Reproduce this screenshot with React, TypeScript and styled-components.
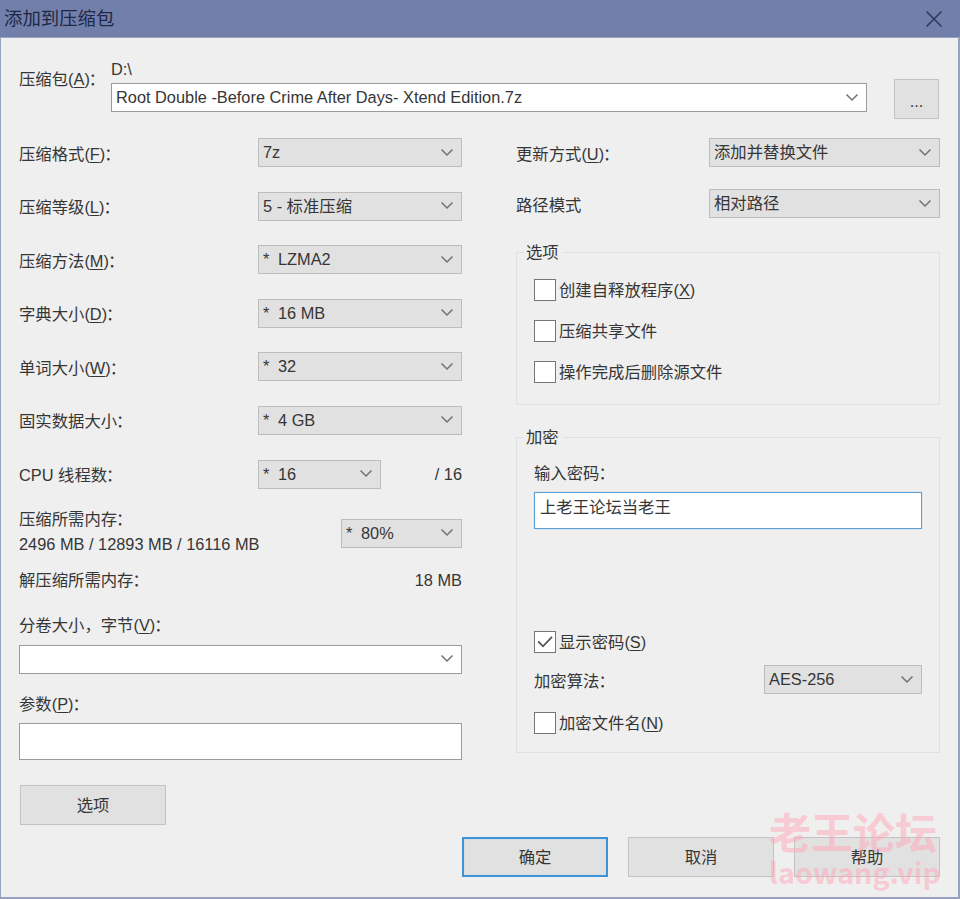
import React from "react";
import styled, { createGlobalStyle, css } from "styled-components";

const GlobalStyle = createGlobalStyle`
  * { box-sizing: border-box; }
  body { margin: 0; background: #efefef; }
`;

const Dialog = styled.div`
  position: relative;
  width: 960px;
  height: 899px;
  display: flex;
  flex-direction: column;
  overflow: hidden;
  background: #efefef;
  color: #363636;
  font-family: "Liberation Sans", "Noto Sans CJK SC", sans-serif;
  font-size: 16.35px;
  line-height: 20px;
  white-space: pre;
`;

const TitleBar = styled.header`
  height: 37px;
  flex: none;
  display: flex;
  align-items: center;
  justify-content: space-between;
  padding: 0 17px 0 4px;
  background: #737fab;
  color: #1c2846;
  font-size: 18.4px;
`;

const Body = styled.main`
  flex: 1;
  display: flex;
  flex-direction: column;
  padding: 22px 18px 0 18px;
  border: solid #98a2bf;
  border-width: 1px 2px 2px 1px;
`;

const ArchiveRow = styled.div`
  display: flex;
  height: 59px;
`;

const ArchiveLabel = styled.div`
  width: 92px;
  padding-top: 9px;
`;

const ArchiveField = styled.div`
  width: 756px;
  margin-right: 27px;
`;

const Path = styled.div`
  height: 23px;
  line-height: 18px;
`;

const Columns = styled.div`
  display: flex;
  justify-content: space-between;
  margin-top: 19px;
`;

const LeftColumn = styled.section`
  width: 443px;
`;

const RightColumn = styled.section`
  width: 424px;
`;

const Row = styled.div<{ $gap?: number }>`
  display: flex;
  justify-content: space-between;
  align-items: center;
  height: 29px;
  margin-bottom: ${(p) => p.$gap ?? 24.6}px;
`;

const Label = styled.div`
  padding-top: 2px;
`;

const ThreadFields = styled.div`
  width: 204px;
  display: flex;
  align-items: center;
  justify-content: space-between;
`;

const Mnemonic = styled.span`
  text-decoration: underline;
  text-decoration-thickness: 1px;
  text-underline-offset: 2px;
`;

const ColonMark = styled.span`
  display: inline-block;
  margin-left: -1px;
`;

const ComboBox = styled.div<{ $width: number; $editable?: boolean }>`
  width: ${(p) => p.$width}px;
  height: 29px;
  display: flex;
  align-items: center;
  justify-content: space-between;
  padding: 0 7px 1px 4px;
  border: 1px solid ${(p) => (p.$editable ? "#9b9b9b" : "#bdbdbd")};
  background: ${(p) => (p.$editable ? "#fff" : "#e1e1e1")};
`;

const Star = styled.span`
  display: inline-block;
  width: 15px;
`;

const MemoryRow = styled.div`
  display: flex;
  justify-content: space-between;
  height: 52px;
  line-height: 25px;
`;

const MemoryText = styled.div`
  margin-top: -1px;
`;

const MemoryCombo = styled.div`
  padding-top: 11px;
  line-height: 20px;
`;

const DecompressRow = styled.div`
  display: flex;
  justify-content: space-between;
  margin-top: 10px;
`;

const FieldLabel = styled.div<{ $top: number; $bottom: number }>`
  margin: ${(p) => p.$top}px 0 ${(p) => p.$bottom}px;
`;

const TextInput = styled.div<{ $focused?: boolean }>`
  height: 37px;
  padding: 4px 5px;
  border: 1px solid #9b9b9b;
  background: #fff;
  ${(p) =>
    p.$focused &&
    css`
      border-color: #5c9fd4;
      box-shadow: 0 0 1px #8cc4ee;
    `}
`;

const Button = styled.div<{ $width: number; $primary?: boolean }>`
  width: ${(p) => p.$width}px;
  height: 40px;
  flex: none;
  display: flex;
  align-items: center;
  justify-content: center;
  border: 1px solid #c3c3c3;
  background: #e1e1e1;
  ${(p) =>
    p.$primary &&
    css`
      border: 2px solid #3f92d6;
      box-shadow: inset 0 0 1px #7dbcf0;
    `}
`;

const OptionsButton = styled(Button)`
  margin: 25px 0 0 1px;
`;

const BrowseButton = styled(Button)`
  margin-top: 19px;
  padding-top: 3px;
`;

const Group = styled.fieldset<{ $height: number; $gap?: number }>`
  height: ${(p) => p.$height}px;
  min-width: 0;
  margin: 0 0 ${(p) => p.$gap ?? 0}px;
  padding: 0 17px;
  border: 1px solid #e0e0e0;
`;

const Legend = styled.legend`
  margin-left: -10px;
  padding: 0 4px 0 2px;
  height: 20px;
`;

const CheckRow = styled.div<{ $top: number }>`
  display: flex;
  align-items: center;
  gap: 3px;
  height: 22px;
  margin-top: ${(p) => p.$top}px;
`;

const CheckSquare = styled.span`
  width: 22px;
  height: 22px;
  display: flex;
  align-items: center;
  justify-content: center;
  border: 1px solid #767676;
  background: #fff;
`;

const AlgorithmRow = styled(Row)`
  margin-top: 12px;
`;

const Footer = styled.footer`
  display: flex;
  justify-content: flex-end;
  gap: 20px;
  margin-top: 12px;
`;

const Watermark = styled.div`
  position: absolute;
  left: 769px;
  top: 808px;
  color: rgba(255, 165, 185, 0.5);
  font-family: "Noto Sans CJK SC", sans-serif;
  font-weight: 700;
  font-size: 42px;
  line-height: 46px;
`;

const WatermarkSite = styled.div`
  font-weight: 700;
  font-size: 28.7px;
  line-height: 36px;
`;

const Chevron = () => (
  <svg width="14" height="9" viewBox="0 0 14 9" fill="none" stroke="#727272" strokeWidth="1.5">
    <path d="M1.5 1.5 L7 7 L12.5 1.5" />
  </svg>
);

const CloseIcon = () => (
  <svg width="18" height="18" viewBox="0 0 18 18" fill="none" stroke="#303b5c" strokeWidth="1.6">
    <path d="M1.5 1.5 L16.5 16.5 M16.5 1.5 L1.5 16.5" />
  </svg>
);

const CheckIcon = () => (
  <svg width="16" height="14" viewBox="0 0 16 14" fill="none" stroke="#555" strokeWidth="1.8">
    <path d="M1.2 6.5 L6 11.3 L15 1.8" />
  </svg>
);

interface ComboProps {
  width?: number;
  auto?: boolean;
  editable?: boolean;
  value?: string;
}

const Combo = ({ width = 204, auto, editable, value }: ComboProps) => (
  <ComboBox $width={width} $editable={editable}>
    <span>
      {auto && <Star>*</Star>}
      {value}
    </span>
    <Chevron />
  </ComboBox>
);

const Colon = () => <ColonMark>{"\uFF1A"}</ColonMark>;

const Keyed = ({ text, hotkey, colon = true }: { text: string; hotkey: string; colon?: boolean }) => (
  <>
    {text}(<Mnemonic>{hotkey}</Mnemonic>){colon && <Colon />}
  </>
);

interface CheckProps {
  top: number;
  checked?: boolean;
  children: React.ReactNode;
}

const Check = ({ top, checked, children }: CheckProps) => (
  <CheckRow $top={top}>
    <CheckSquare>{checked && <CheckIcon />}</CheckSquare>
    <span>{children}</span>
  </CheckRow>
);

const settings = [
  { text: "压缩格式", hotkey: "F", value: "7z" },
  { text: "压缩等级", hotkey: "L", value: "5 - 标准压缩" },
  { text: "压缩方法", hotkey: "M", value: "LZMA2", auto: true },
  { text: "字典大小", hotkey: "D", value: "16 MB", auto: true },
  { text: "单词大小", hotkey: "W", value: "32", auto: true },
];

export default function App() {
  return (
    <>
      <GlobalStyle />
      <Dialog lang="zh-CN">
        <TitleBar>
          <span>添加到压缩包</span>
          <CloseIcon />
        </TitleBar>
        <Body>
          <ArchiveRow>
            <ArchiveLabel>
              <Keyed text="压缩包" hotkey="A" />
            </ArchiveLabel>
            <ArchiveField>
              <Path>D:\</Path>
              <Combo width={756} editable value="Root Double -Before Crime After Days- Xtend Edition.7z" />
            </ArchiveField>
            <BrowseButton $width={45}>...</BrowseButton>
          </ArchiveRow>
          <Columns>
            <LeftColumn>
              {settings.map((s) => (
                <Row key={s.hotkey}>
                  <Label>
                    <Keyed text={s.text} hotkey={s.hotkey} />
                  </Label>
                  <Combo auto={s.auto} value={s.value} />
                </Row>
              ))}
              <Row>
                <Label>固实数据大小<Colon /></Label>
                <Combo auto value="4 GB" />
              </Row>
              <Row $gap={19}>
                <Label>CPU 线程数<Colon /></Label>
                <ThreadFields>
                  <Combo width={123} auto value="16" />
                  <span>/ 16</span>
                </ThreadFields>
              </Row>
              <MemoryRow>
                <MemoryText>
                  压缩所需内存<Colon />
                  <br />
                  2496 MB / 12893 MB / 16116 MB
                </MemoryText>
                <MemoryCombo>
                  <Combo width={121} auto value="80%" />
                </MemoryCombo>
              </MemoryRow>
              <DecompressRow>
                <span>解压缩所需内存<Colon /></span>
                <span>18 MB</span>
              </DecompressRow>
              <FieldLabel $top={25} $bottom={10}>
                <Keyed text={"分卷大小\uFF0C字节"} hotkey="V" />
              </FieldLabel>
              <Combo width={443} editable />
              <FieldLabel $top={20} $bottom={9}>
                <Keyed text="参数" hotkey="P" />
              </FieldLabel>
              <TextInput />
              <OptionsButton $width={146}>选项</OptionsButton>
            </LeftColumn>
            <RightColumn>
              <Row $gap={22}>
                <Label>
                  <Keyed text="更新方式" hotkey="U" />
                </Label>
                <Combo width={231} value="添加并替换文件" />
              </Row>
              <Row $gap={24}>
                <Label>路径模式</Label>
                <Combo width={231} value="相对路径" />
              </Row>
              <Group $height={163} $gap={22}>
                <Legend>选项</Legend>
                <Check top={17}>
                  <Keyed text="创建自释放程序" hotkey="X" colon={false} />
                </Check>
                <Check top={19}>压缩共享文件</Check>
                <Check top={19}>操作完成后删除源文件</Check>
              </Group>
              <Group $height={326}>
                <Legend>加密</Legend>
                <FieldLabel $top={16} $bottom={9}>
                  输入密码<Colon />
                </FieldLabel>
                <TextInput $focused>上老王论坛当老王</TextInput>
                <Check top={102} checked>
                  <Keyed text="显示密码" hotkey="S" colon={false} />
                </Check>
                <AlgorithmRow $gap={18}>
                  <Label>加密算法<Colon /></Label>
                  <Combo width={158} value="AES-256" />
                </AlgorithmRow>
                <Check top={0}>
                  <Keyed text="加密文件名" hotkey="N" colon={false} />
                </Check>
              </Group>
            </RightColumn>
          </Columns>
          <Footer>
            <Button $width={146} $primary>确定</Button>
            <Button $width={146}>取消</Button>
            <Button $width={146}>帮助</Button>
          </Footer>
        </Body>
        <Watermark>
          老王论坛
          <WatermarkSite>laowang.vip</WatermarkSite>
        </Watermark>
      </Dialog>
    </>
  );
}
